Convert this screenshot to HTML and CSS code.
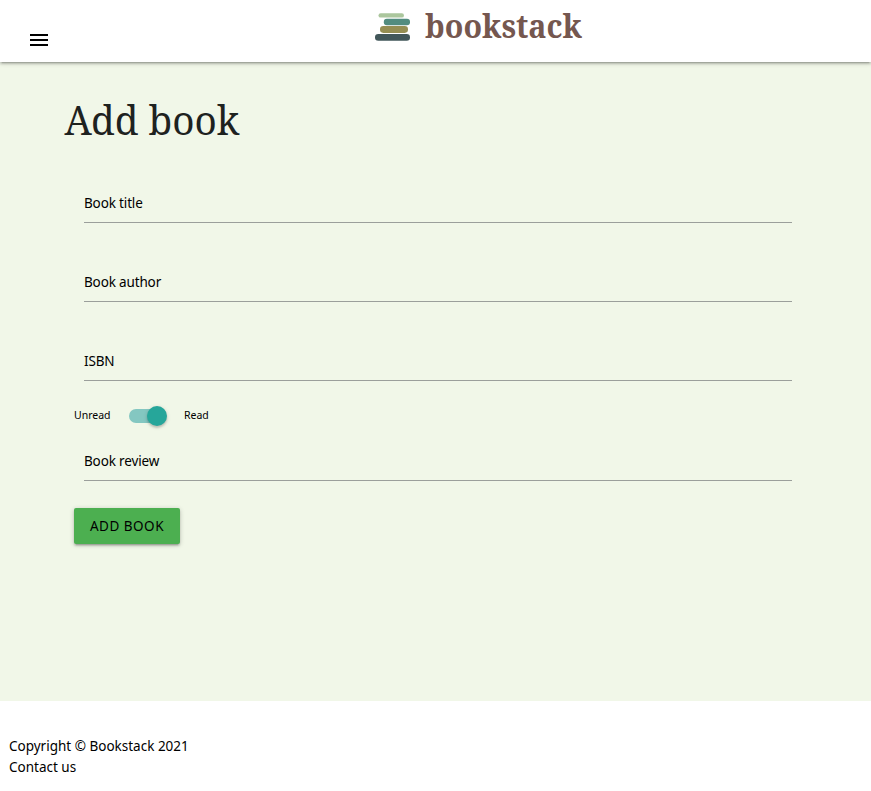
FILE: index.html
```html
<!DOCTYPE html>
<html lang="en">
<head>
<meta charset="utf-8">
<title>Bookstack</title>
<link rel="stylesheet" href="styles.css">
</head>
<body>
<header class="navbar">
  <button class="menu" aria-label="Menu">
    <svg width="18" height="12" viewBox="0 0 18 12"><path d="M0 0h18v2H0zM0 5h18v2H0zM0 10h18v2H0z"/></svg>
  </button>
  <a class="brand" href="#">
    <svg width="214" height="40" viewBox="0 0 214 40">
      <rect x="7.5" y="5.2" width="25.5" height="4.4" rx="2.2" fill="#abc69d"/>
      <rect x="12.8" y="10.8" width="26.2" height="6.4" rx="3" fill="#528c7f"/>
      <rect x="9" y="17.9" width="28" height="7" rx="3.3" fill="#958e53"/>
      <rect x="4" y="26" width="35" height="6.8" rx="3.3" fill="#42575a"/>
      <text class="brand-text" x="54" y="30" textLength="157" lengthAdjust="spacingAndGlyphs">bookstack</text>
    </svg>
  </a>
</header>
<main class="page">
  <h1 class="title"><svg width="180" height="50" viewBox="0 0 180 50"><text x="-0.5" y="39" textLength="175" lengthAdjust="spacingAndGlyphs">Add book</text></svg></h1>
  <form class="form">
    <div class="field"><label>Book title</label></div>
    <div class="field"><label>Book author</label></div>
    <div class="field"><label>ISBN</label></div>
    <div class="switch"><span class="unread">Unread</span><span class="track"><span class="knob"></span></span><span class="read">Read</span></div>
    <div class="field review"><label>Book review</label></div>
    <button class="submit" type="button">ADD BOOK</button>
  </form>
</main>
<footer class="footer">
  <p>Copyright © Bookstack 2021</p>
  <p>Contact us</p>
</footer>
</body>
</html>
```
FILE: styles.css
```css
* { box-sizing: border-box; }
body {
  margin: 0;
  height: 791px;
  display: flex;
  flex-direction: column;
  background: #fff;
  color: #000;
  font: 13.5px/21px "Noto Sans", sans-serif;
  overflow: hidden;
}
.navbar {
  position: relative;
  z-index: 1;
  flex: none;
  height: 62px;
  display: flex;
  align-items: flex-start;
  background: #fff;
  box-shadow: 0 2px 2px 0 rgba(0,0,0,.14), 0 3px 1px -2px rgba(0,0,0,.12), 0 1px 5px 0 rgba(0,0,0,.2);
}
.menu { display: block; width: 18px; height: 12px; margin: 34px 0 0 30px; padding: 0; border: 0; background: none; }
.menu svg, .brand svg, .title svg { display: block; overflow: visible; }
.brand { margin: 8px 0 0 323px; }
.brand-text { font: 700 32.5px "Noto Serif", "Liberation Serif", serif; fill: #75574f; }
.page { flex: none; height: 639px; padding: 34px 69px 0 65px; background: #f1f7e8; }
.title { margin: 0; height: 50px; }
.title text { font: 400 40px "Noto Serif", "DejaVu Serif", serif; fill: #1e221f; }
.form { padding: 30px 10px 0 9px; }
.field { height: 47px; margin: 0 0 32px 10px; padding-top: 17px; border-bottom: 1px solid #9b9f9b; }
.field label { display: block; white-space: nowrap; letter-spacing: -.15px; }
.switch { display: flex; align-items: center; height: 20px; margin-top: -7px; font-size: 10.5px; }
.unread { width: 55px; margin-top: -2px; }
.track { position: relative; width: 36px; height: 14px; border-radius: 15px; background: #84c7c1; }
.knob { position: absolute; left: 18px; top: -3px; width: 20px; height: 20px; border-radius: 50%; background: #26a69a; box-shadow: 0 2px 2px rgba(0,0,0,.14), 0 1px 4px rgba(0,0,0,.15); }
.read { margin: -2px 0 0 19px; }
.field.review { margin: 8px 0 27px 10px; }
.submit {
  display: block; width: 106px; height: 36px; padding: 0; border: 0; border-radius: 2px;
  background: #4caf50; color: #000; font: 13.5px/36px "Noto Sans", sans-serif; letter-spacing: .5px;
  box-shadow: 0 2px 2px rgba(0,0,0,.14), 0 3px 1px -2px rgba(0,0,0,.12), 0 1px 5px rgba(0,0,0,.2);
}
.footer { padding: 35px 9px 0; }
.footer p { margin: 0; }
```
